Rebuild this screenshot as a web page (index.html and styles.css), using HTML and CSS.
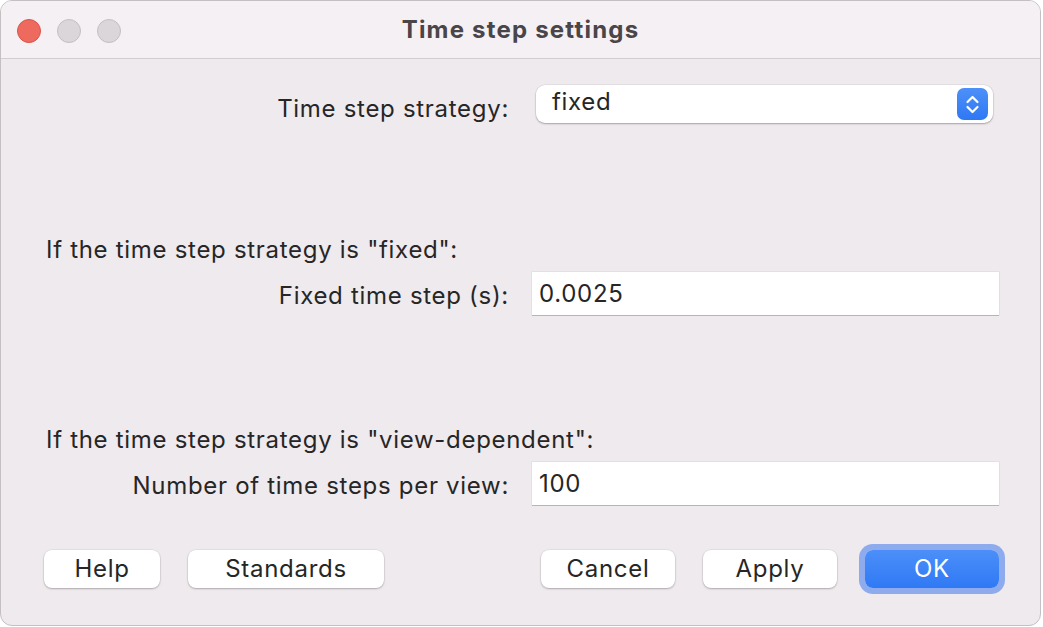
FILE: index.html
```html
<!DOCTYPE html>
<html>
<head>
<meta charset="utf-8">
<link rel="stylesheet" href="styles.css">
</head>
<body>
<div class="window">
  <div class="titlebar">
    <div class="lights">
      <span class="light red"></span>
      <span class="light"></span>
      <span class="light"></span>
    </div>
    <div class="title">Time step settings</div>
    <div class="spacer"></div>
  </div>
  <div class="content">
    <div class="row row-strategy">
      <div class="label">Time step strategy:</div>
      <div class="control">
        <div class="popup">
          <span class="popup-text">fixed</span>
          <span class="stepper">
            <svg width="31" height="32" viewBox="0 0 31 32">
              <path d="M10.5 14 L15.5 9 L20.5 14" fill="none" stroke="#fff" stroke-width="2.2" stroke-linecap="round" stroke-linejoin="round"/>
              <path d="M10.5 19 L15.5 24 L20.5 19" fill="none" stroke="#fff" stroke-width="2.2" stroke-linecap="round" stroke-linejoin="round"/>
            </svg>
          </span>
        </div>
      </div>
    </div>
    <div class="section section-fixed">If the time step strategy is "fixed":</div>
    <div class="row row-field">
      <div class="label">Fixed time step (s):</div>
      <div class="control"><div class="field">0.0025</div></div>
    </div>
    <div class="section section-view">If the time step strategy is "view-dependent":</div>
    <div class="row row-field">
      <div class="label">Number of time steps per view:</div>
      <div class="control"><div class="field">100</div></div>
    </div>
    <div class="buttons">
      <div class="group">
        <div class="btn btn-help">Help</div>
        <div class="btn btn-standards">Standards</div>
      </div>
      <div class="group">
        <div class="btn btn-std">Cancel</div>
        <div class="btn btn-std">Apply</div>
        <div class="btn btn-std btn-ok">OK</div>
      </div>
    </div>
  </div>
</div>
</body>
</html>
```

FILE: styles.css
```css
html, body {
  margin: 0;
  padding: 0;
  background: #ffffff;
}
body {
  font-family: Inter, "Noto Sans", "Liberation Sans", sans-serif;
  color: #262626;
  letter-spacing: 0.7px;
}
.window {
  width: 1039px;
  height: 624px;
  border: 1px solid #c4bfc3;
  border-radius: 12px;
  background: #efeaee;
  overflow: hidden;
  display: flex;
  flex-direction: column;
}
.titlebar {
  height: 57px;
  background: #f5f0f4;
  border-bottom: 1px solid #d2cdd1;
  display: grid;
  grid-template-columns: 1fr auto 1fr;
  align-items: center;
}
.lights {
  display: flex;
  gap: 16px;
  padding-left: 16px;
  padding-top: 2px;
}
.light {
  width: 24px;
  height: 24px;
  border-radius: 50%;
  background: #dbd6da;
  border: 1px solid #c4bfc3;
  box-sizing: border-box;
}
.light.red {
  background: #ee6a5f;
  border-color: #d9544a;
}
.title {
  font-size: 24px;
  font-weight: 700;
  letter-spacing: 1.2px;
  color: #4a4548;
}
.content {
  flex: 1;
  display: flex;
  flex-direction: column;
  padding: 26px 41px 0 45px;
}
.row {
  display: grid;
  grid-template-columns: 463px 1fr;
  column-gap: 23px;
  align-items: center;
}
.label {
  text-align: right;
  font-size: 24px;
  line-height: 28px;
}
.row-strategy .label {
  padding-top: 10px;
}
.popup {
  margin: 0 6px 0 4px;
  height: 38px;
  background: #ffffff;
  border-radius: 9px;
  box-shadow: 0 1px 2px rgba(0, 0, 0, 0.28), 0 0 0 0.5px rgba(0, 0, 0, 0.08);
  display: flex;
  align-items: center;
  justify-content: space-between;
  padding: 0 5px 0 16px;
}
.popup-text {
  font-size: 24px;
  line-height: 28px;
  padding-bottom: 4px;
}
.stepper {
  width: 31px;
  height: 32px;
  border-radius: 7px;
  background: linear-gradient(#4d90f9, #2f78f4);
  display: flex;
}
.section {
  font-size: 24px;
  line-height: 28px;
}
.section-fixed {
  margin-top: 113px;
}
.section-view {
  margin-top: 111px;
}
.row-field {
  margin-top: 8px;
}
.row-field .label {
  padding-top: 4px;
}
.field {
  height: 43px;
  background: #ffffff;
  box-shadow: 0 1px 0 #b7b3b6, 0 0 0 0.5px #d8d4d7;
  font-size: 24px;
  line-height: 43px;
  padding-left: 7px;
}
.buttons {
  margin-top: 45px;
  display: flex;
  justify-content: space-between;
}
.buttons .group:first-child {
  margin-left: -2px;
}
.group {
  display: flex;
  gap: 28px;
}
.btn {
  height: 38px;
  border-radius: 8px;
  background: #ffffff;
  box-shadow: 0 1px 2px rgba(0, 0, 0, 0.25), 0 0 0 0.5px rgba(0, 0, 0, 0.08);
  font-size: 24px;
  line-height: 38px;
  text-align: center;
  box-sizing: border-box;
}
.btn-help {
  width: 116px;
}
.btn-standards {
  width: 196px;
}
.btn-std {
  width: 134px;
}
.btn-ok {
  background: linear-gradient(#4c8ff9, #2f79f5);
  color: #ffffff;
  box-shadow: 0 0 0 6px rgba(110, 150, 238, 0.75);
}
```
